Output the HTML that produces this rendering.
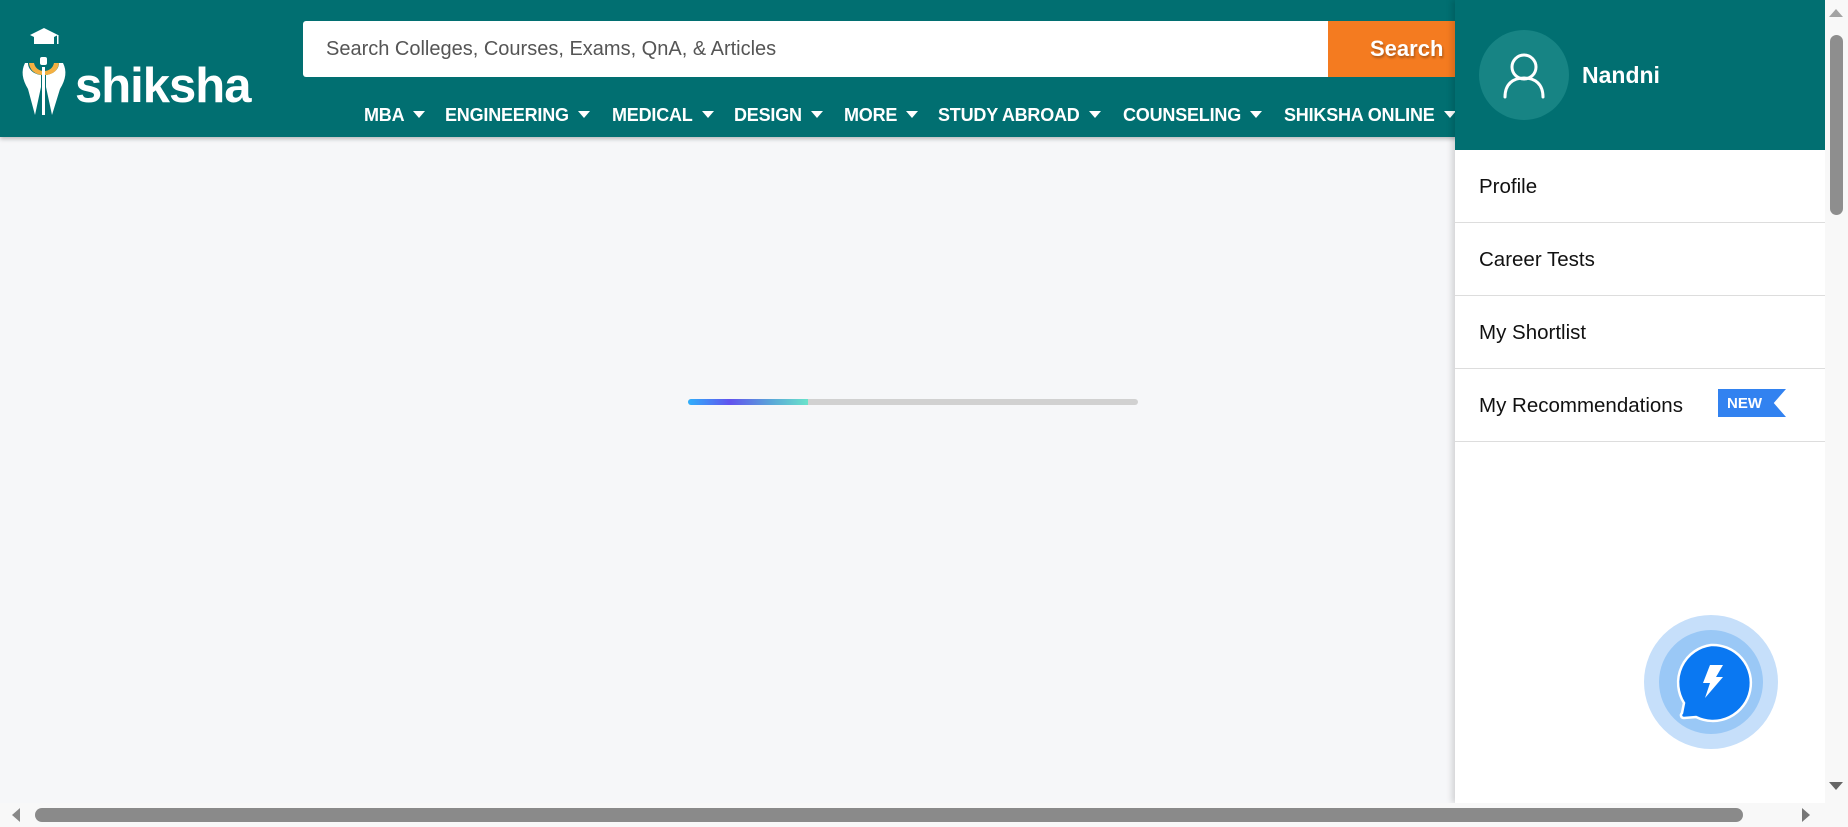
<!DOCTYPE html>
<html><head><meta charset="utf-8"><style>
*{margin:0;padding:0;box-sizing:border-box}
html,body{width:1848px;height:827px;overflow:hidden;background:#f6f7f9;font-family:"Liberation Sans",Arial,sans-serif;position:relative}
.hdr{position:absolute;left:0;top:0;width:1825px;height:137px;background:#016f71;box-shadow:0 2px 4px rgba(0,0,0,.25)}
.search{position:absolute;left:303px;top:21px;width:1025px;height:56px;background:#fff;border-radius:3px 0 0 3px;font-size:20px;color:#555;padding:17px 0 0 23px}
.btn{position:absolute;left:1328px;top:21px;width:140px;height:56px;background:#f47b20;color:#fff;font-weight:bold;font-size:22px;padding:15px 0 0 42px;text-shadow:1px 2px 2px rgba(0,0,0,.3)}
.nav{position:absolute;top:105px;color:#fff;font-weight:bold;font-size:18px;white-space:nowrap;letter-spacing:-.2px}
.nav:after{content:"";display:inline-block;margin-left:9px;border-left:6px solid transparent;border-right:6px solid transparent;border-top:7px solid #fff;vertical-align:3px}
.word{position:absolute;left:75px;top:58px;color:#fff;font-weight:bold;font-size:49px;letter-spacing:-1px}
.panel{position:absolute;left:1455px;top:0;width:370px;height:803px;background:#fff;box-shadow:-3px 0 6px rgba(0,0,0,.15)}
.ph{height:150px;background:#016f71;position:relative}
.av{position:absolute;left:24px;top:30px;width:90px;height:90px;border-radius:50%;background:#178484}
.name{position:absolute;left:127px;top:62px;color:#fff;font-weight:bold;font-size:23px}
.item{height:73px;border-bottom:1px solid #ddd;font-size:20.5px;color:#111;padding:25px 0 0 24px;position:relative}
.new{position:absolute;left:263px;top:20px;width:68px;height:28px;background:#3282f0;color:#fff;font-size:15px;font-weight:bold;padding:6px 0 0 9px;clip-path:polygon(0 0,100% 0,82% 50%,100% 100%,0 100%)}
.vs{position:absolute;left:1825px;top:0;width:23px;height:803px;background:#f8f8f8}
.hs{position:absolute;left:0;top:803px;width:1848px;height:24px;background:#f8f8f8}
</style></head><body>
<div class="hdr">
 <svg style="position:absolute;left:16px;top:27px" width="56" height="90" viewBox="0 0 56 90">
  <path d="M14 8 L28 1 L42 8 L38 10 L38 17 L18 17 L18 10 Z" fill="#fff"/>
  <rect x="41" y="8" width="1.5" height="9" fill="#fff"/>
  <path d="M9 36 C5 44 6 52 12 62 L19 88 L25 60 L25 48 C17 47 12 42 12 36 Z" fill="#fff"/>
  <path d="M47 36 C51 44 50 52 44 62 L36 88 L30 60 L30 48 C38 47 43 42 43 36 Z" fill="#fff"/>
  <path d="M13 36 C14 44 20 48 28 48 C36 48 42 44 43 36 L38 36 C37 41 33 44 28 44 C23 44 19 41 18 36 Z" fill="#f4b042"/>
  <rect x="26" y="40" width="3" height="48" fill="#fff"/>
  <rect x="24" y="30" width="7" height="8" rx="2" fill="#fff"/>
 </svg>
 <div class="word">shiksha</div>
 <div class="search">Search Colleges, Courses, Exams, QnA, &amp; Articles</div>
 <div class="btn">Search</div>
 <div class="nav" style="left:364px">MBA</div>
 <div class="nav" style="left:445px">ENGINEERING</div>
 <div class="nav" style="left:612px">MEDICAL</div>
 <div class="nav" style="left:734px">DESIGN</div>
 <div class="nav" style="left:844px">MORE</div>
 <div class="nav" style="left:938px">STUDY ABROAD</div>
 <div class="nav" style="left:1123px">COUNSELING</div>
 <div class="nav" style="left:1284px">SHIKSHA ONLINE</div>
</div>
<div style="position:absolute;left:688px;top:399px;width:450px;height:6px;border-radius:3px;background:#d1d1d1"></div>
<div style="position:absolute;left:688px;top:399px;width:120px;height:6px;border-radius:3px 0 0 3px;background:linear-gradient(90deg,#2fb0fb,#6253ee 35%,#5aa8d8 70%,#6ae3cb)"></div>
<div class="panel">
 <div class="ph"><div class="av"><svg width="90" height="90" viewBox="0 0 90 90"><circle cx="45" cy="37" r="12" fill="none" stroke="#fff" stroke-width="3"/><path d="M26 67 C26 54 34 48 45 48 C56 48 64 54 64 67" fill="none" stroke="#fff" stroke-width="3" stroke-linecap="round"/></svg></div><div class="name">Nandni</div></div>
 <div class="item">Profile</div>
 <div class="item">Career Tests</div>
 <div class="item">My Shortlist</div>
 <div class="item">My Recommendations<div class="new">NEW</div></div>
</div>
<svg style="position:absolute;left:1644px;top:615px" width="134" height="134" viewBox="0 0 134 134">
 <circle cx="67" cy="67" r="67" fill="#c6dffa"/>
 <circle cx="67" cy="67" r="52" fill="#9ac8f6"/>
 <path d="M67 30 A38 38 0 1 1 52 102 L40 103 C37 103 36 100 38 98 L40 88 A38 38 0 0 1 67 30 Z" fill="#0a78f2" stroke="#fff" stroke-width="2.5"/>
 <path d="M66 50 L79 50 L72 62 L79 62 L61 83 L66 68 L59 68 Z" fill="#fff"/>
</svg>
<div class="vs"><div style="position:absolute;left:4px;top:9px;border-left:7px solid transparent;border-right:7px solid transparent;border-bottom:8px solid #a3a3a3"></div><div style="position:absolute;left:5px;top:35px;width:13px;height:180px;border-radius:7px;background:#8e8e8e"></div><div style="position:absolute;left:4px;top:782px;border-left:7px solid transparent;border-right:7px solid transparent;border-top:8px solid #666"></div></div>
<div class="hs"><div style="position:absolute;left:12px;top:5px;border-top:7px solid transparent;border-bottom:7px solid transparent;border-right:8px solid #888"></div><div style="position:absolute;left:35px;top:5px;width:1708px;height:14px;border-radius:7px;background:#8a8a8a"></div><div style="position:absolute;left:1802px;top:5px;border-top:7px solid transparent;border-bottom:7px solid transparent;border-left:8px solid #777"></div></div>
</body></html>
